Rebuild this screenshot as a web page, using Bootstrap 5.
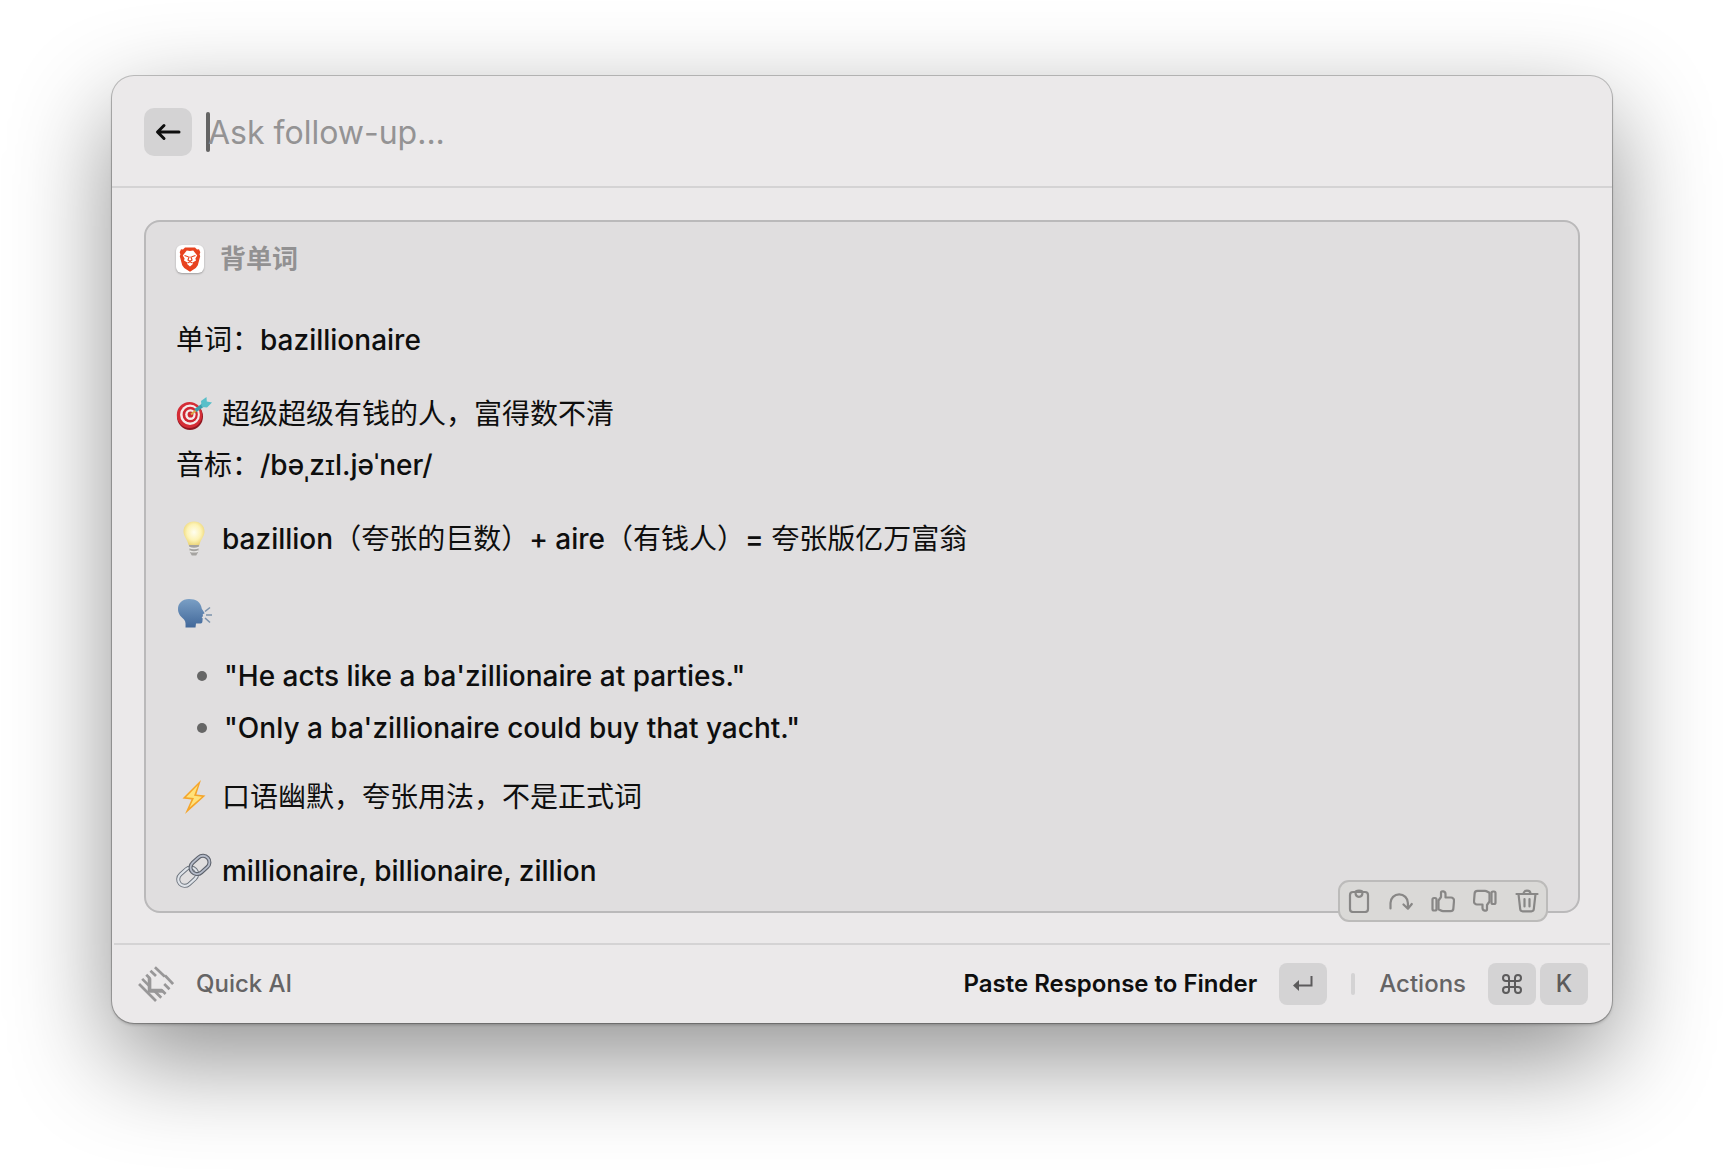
<!DOCTYPE html>
<html lang="zh-CN">
<head>
<meta charset="utf-8">
<meta name="viewport" content="width=device-width, initial-scale=1">
<title>Quick AI</title>
<link href="https://cdn.jsdelivr.net/npm/bootstrap@5.3.0/dist/css/bootstrap.min.css" rel="stylesheet">
<style>
  body { background: #fff; color: #0e0e0e; font-family: Inter, "Noto Sans CJK SC", sans-serif; font-weight: 500; padding: 76px 112px 140px; min-height: 100vh; }
  .panel-window { background: #ebe9ea; border-radius: 22px; box-shadow: 0 0 0 1px rgba(0,0,0,.22), 0 2px 3px rgba(0,0,0,.2), 0 36px 100px rgba(0,0,0,.44); }
  .panel-head { padding: 32px 32px 30px; border-bottom: 2px solid #d4d3d4; }
  .back-btn { width: 48px; height: 48px; border-radius: 10px; background: #d4d3d4; color: #0e0e0e; margin-right: 14px; }
  .text-caret { width: 4px; height: 40px; border-radius: 2px; background: #646464; margin-right: -2px; }
  .ask-input { font-size: 32px; line-height: 40px; height: 48px; color: #0e0e0e; outline: 0; padding: 1px 0 0; }
  .ask-input::placeholder { color: #949394; opacity: 1; }
  .panel-body { padding: 32px 32px 30px; }
  .answer { border: 2px solid #bab9ba; border-radius: 16px; background: #e0dedf; padding: 22px 30px 14px; font-size: 28px; line-height: 51px; }
  .answer-title { gap: 16px; font-size: 26px; line-height: 30px; font-weight: 600; color: #929192; margin-bottom: 41px; }
  .app-icon { width: 28px; height: 28px; border-radius: 6px; background: #fff; box-shadow: 0 1px 2px rgba(0,0,0,.3); }
  .answer p { margin-bottom: 23px; }
  .answer p.tight { margin-bottom: 11px; }
  .zh { font-weight: 400; }
  .emoji { width: 36px; height: 36px; margin-right: 10px; vertical-align: -8px; }
  .answer ul { margin-bottom: 18px; padding-left: 21px; line-height: 52px; }
  .answer li { gap: 17px; }
  .answer li::before { content: ""; width: 10px; height: 10px; border-radius: 50%; background: #666; }
  .tool-strip { right: 30px; bottom: -11px; border: 2px solid #bcbbba; border-radius: 11px; background: #dad9d7; padding: 7px; gap: 18px; color: #888786; }
  .tool-strip svg, .tool-strip button { width: 24px; height: 24px; }
  .panel-foot { border-top: 2px solid #d4d3d4; margin: 0 2px; padding: 18px 22px 18px 24px; font-size: 24px; line-height: 42px; color: #656465; }
  .foot-logo { width: 36px; height: 36px; margin-right: 22px; color: #989798; }
  .foot-btn { font-size: 24px; line-height: 42px; font-weight: 500; color: #656465; gap: 22px; }
  .foot-btn.primary-action { color: #0e0e0e; font-weight: 600; }
  .key-cap { width: 48px; height: 42px; border-radius: 8px; background: #d4d3d4; color: #5c5b5c; font: 500 24px/42px Inter, sans-serif; }
  .foot-sep { width: 4px; height: 22px; border-radius: 2px; background: #d4d3d4; margin: 0 24px; }
</style>
</head>
<body>
<main class="panel-window">
  <header class="panel-head d-flex align-items-center">
    <button type="button" class="back-btn btn border-0 p-0 d-flex align-items-center justify-content-center" aria-label="Back">
      <svg width="26" height="20" viewBox="0 0 26 20" fill="none" stroke="currentColor" stroke-width="3" stroke-linecap="round" stroke-linejoin="round"><path d="M24 10H3M9 3.500 2.500 10 9 16.500"/></svg>
    </button>
    <span class="text-caret flex-shrink-0"></span>
    <input class="ask-input flex-grow-1 border-0 bg-transparent" type="text" placeholder="Ask follow-up..." aria-label="Ask follow-up">
  </header>

  <div class="panel-body">
    <article class="answer position-relative">
      <div class="answer-title d-flex align-items-center">
        <span class="app-icon d-flex align-items-center justify-content-center">
          <svg width="22" height="25" viewBox="0 0 22 25"><path d="M6 .5h10l2 2 2-.2 1.300 3-.7 2 .6 2-2.400 9-2 2.700-5.800 3.700-5.800-3.700-2-2.700L.8 9.300l.6-2-.7-2L2 2.300l2 .2z" fill="#e8421f"/><path d="m11 4 3.200-.4 4 4.800-1.800 3 .6 2-3.300 2 .2 1.500L11 19.500l-2.900-2.600.2-1.500-3.300-2 .6-2-1.800-3 4-4.800z" fill="#fff"/><path d="m5.500 8.500 3.700 1.200M16.500 8.500l-3.700 1.200M10.200 9.500 9 13l2 1.300 2-1.300-1.200-3.500M8.500 16l2.500-1.200 2.500 1.200" fill="none" stroke="#e8421f" stroke-width="1.200"/></svg>
        </span>
        <span>背单词</span>
      </div>

      <p><span class="zh">单词：</span>bazillionaire</p>
      <p><svg class="emoji" viewBox="0 0 36 36" role="img" aria-label="Direct hit"><ellipse cx="14" cy="20.500" rx="13" ry="13.500" fill="#8f1620"/><ellipse cx="13.500" cy="19" rx="12.700" ry="13" fill="#d42c35"/><ellipse cx="14" cy="18.800" rx="9.900" ry="10.200" fill="#f4eaea"/><ellipse cx="14.200" cy="18.700" rx="7.600" ry="7.900" fill="#cf2631"/><ellipse cx="14.400" cy="18.600" rx="5.200" ry="5.400" fill="#f4eaea"/><ellipse cx="14.500" cy="18.500" rx="2.900" ry="3.100" fill="#cf2631"/><path d="m15 18.500 5.500-4.500" stroke="#d9a648" stroke-width="2.200"/><path d="m19.500 14.500 9-6.500" stroke="#3a9eac" stroke-width="3.600"/><path d="m25.500 10-.5-5L30.500 1l.3 4.500 5.200 1-5 5-4.500-.5z" fill="#58bfc9"/></svg><span class="zh">超级超级有钱的人，富得数不清<br>音标：</span>/bəˌzɪl.jəˈner/</p>
      <p><svg class="emoji" viewBox="0 0 36 36" role="img" aria-label="Light bulb"><defs><radialGradient id="glow" cx=".5" cy=".45" r=".6"><stop offset="0" stop-color="#fffef0"/><stop offset=".55" stop-color="#fdf3b5"/><stop offset="1" stop-color="#e9cf6c"/></radialGradient></defs><path d="M18 .5C11.500.5 7.500 5 7.500 10.500c0 5 4 8 5.300 14h10.400c1.300-6 5.300-9 5.300-14C28.500 5 24.500.5 18 .5z" fill="url(#glow)"/><path d="M13 24h10l-.8 7-2 3.500h-4.400l-2-3.500z" fill="#a5a3a0"/><path d="M13 26.500c3 1.200 7 1.200 10 0M13.500 30c3 1.200 6 1.200 9 0" stroke="#e9e8e6" stroke-width="1.400" fill="none"/></svg>bazillion<span class="zh">（夸张的巨数）</span>+ aire<span class="zh">（有钱人）</span>= <span class="zh">夸张版亿万富翁</span></p>
      <p class="tight"><svg class="emoji" viewBox="0 0 36 36" role="img" aria-label="Speaking head"><defs><linearGradient id="head" x2="0" y2="1"><stop stop-color="#7a9fc5"/><stop offset="1" stop-color="#42689a"/></linearGradient></defs><path d="M13 4C6 4 2 8.500 2 14c0 5.500 3.500 8 6 10.500 2 2 1.500 5 1.500 8h10l.5-4h4.500c1.500 0 2-1 2-3l.2-2-1-1.200 1.300-1-.3-2 2-1-2.900-4.500C25 7 20 4 13 4z" fill="url(#head)"/><path d="m29 16.500 5-4M30 20h6M29 23l5 4.500" stroke="#7b92ac" stroke-width="1.600"/></svg></p>
      <ul class="list-unstyled">
        <li class="d-flex align-items-center">"He acts like a ba'zillionaire at parties."</li>
        <li class="d-flex align-items-center">"Only a ba'zillionaire could buy that yacht."</li>
      </ul>
      <p><svg class="emoji" viewBox="0 0 36 36" role="img" aria-label="High voltage"><path d="M25 1 6.500 19.500l9 1L9 35l20.500-18.500-9.200-1z" fill="#f5a52b"/><path d="M22 6 10 18.300l8 .8-4.500 9.500L26 17.700l-8-1z" fill="#ffe27a"/></svg><span class="zh">口语幽默，夸张用法，不是正式词</span></p>
      <p class="mb-0"><svg class="emoji" viewBox="0 0 36 36" role="img" aria-label="Link" fill="none"><g transform="rotate(-42 18 18)"><rect x="-1" y="11.500" width="21" height="13" rx="6.500" stroke="#6c737d" stroke-width="4"/><rect x="-1" y="11.500" width="21" height="13" rx="6.500" stroke="#dfe3e9" stroke-width="2.200"/><rect x="16" y="11" width="21" height="13" rx="6.500" stroke="#5c616b" stroke-width="4"/><rect x="16" y="11" width="21" height="13" rx="6.500" stroke="#b5bbc9" stroke-width="1.800"/></g></svg>millionaire, billionaire, zillion</p>

      <div class="tool-strip position-absolute d-flex" role="toolbar" aria-label="Response actions">
        <button type="button" class="btn border-0 p-0 d-flex text-reset" aria-label="Copy"><svg viewBox="0 0 24 24" fill="none" stroke="currentColor" stroke-width="2.200"><rect x="3" y="3" width="18" height="20" rx="3"/><path d="M8.500 3c0 6.500 7 6.500 7 0 0-2-7-2-7 0z"/></svg></button>
        <button type="button" class="btn border-0 p-0 d-flex text-reset" aria-label="Regenerate"><svg viewBox="0 0 24 24" fill="none" stroke="currentColor" stroke-width="2.200" stroke-linecap="round" stroke-linejoin="round"><path d="M1.500 19.500V14a8.700 8.700 0 0 1 17.400 0v5.500M14.500 15.500l4.400 4.200 3.900-4.700"/></svg></button>
        <button type="button" class="btn border-0 p-0 d-flex text-reset" aria-label="Good response"><svg viewBox="0 0 24 24" fill="none" stroke="currentColor" stroke-width="2.200" stroke-linejoin="round"><rect x="1.500" y="9" width="4" height="12.500" rx="1.500"/><path d="M7.500 11.500 10 8V3.500c0-2 4.500-1.500 4.500 1.500v3.500H20a3 3 0 0 1 3 3.200l-.6 7.500a3 3 0 0 1-3 3H12c-2 0-3-1.700-4.500-1.700z"/></svg></button>
        <button type="button" class="btn border-0 p-0 d-flex text-reset" aria-label="Bad response"><svg viewBox="0 0 24 24" fill="none" stroke="currentColor" stroke-width="2.200" stroke-linejoin="round"><g transform="rotate(180 12 12)"><rect x="1.500" y="9" width="4" height="12.500" rx="1.500"/><path d="M7.500 11.500 10 8V3.500c0-2 4.500-1.500 4.500 1.500v3.500H20a3 3 0 0 1 3 3.200l-.6 7.500a3 3 0 0 1-3 3H12c-2 0-3-1.700-4.500-1.700z"/></g></svg></button>
        <button type="button" class="btn border-0 p-0 d-flex text-reset" aria-label="Delete"><svg viewBox="0 0 24 24" fill="none" stroke="currentColor" stroke-width="2.200" stroke-linecap="round" stroke-linejoin="round"><path d="M1.500 5h21M8.500 5c0-4.500 7-4.500 7 0M3.500 5l1.700 15a2.500 2.500 0 0 0 2.500 2.300h8.600a2.500 2.500 0 0 0 2.500-2.300L20.500 5M9.500 10v7.500M14.500 10v7.500"/></svg></button>
      </div>
    </article>
  </div>

  <footer class="panel-foot d-flex align-items-center">
    <svg class="foot-logo" viewBox="0 0 24 24" aria-hidden="true"><path d="M11.300.8 17.800 7M18 6.300l5.400 5.700M.7 12 12 23.300M2.800 8.600l5 5M5.500 5.800 8 8.300M8.300 3.200l3.700 3.500M10.500 16.200l5 5M15.700 16l2.700 2.700M17.500 12l3.500 3.500" fill="none" stroke="#989798" stroke-width="1.800"/><path d="m6.500 6 2.400 2.400v6.800h7l2.300 2.600H6.500z" fill="#989798"/></svg>
    <span class="me-auto">Quick AI</span>
    <button type="button" class="btn foot-btn primary-action border-0 p-0 d-flex align-items-center">Paste Response to Finder
      <span class="key-cap d-flex align-items-center justify-content-center"><svg width="20" height="18" viewBox="0 0 20 18"><path d="M18.500 1v9.500H5" fill="none" stroke="currentColor" stroke-width="2"/><path d="M0 10.500 6 5v11z" fill="currentColor"/></svg></span>
    </button>
    <span class="foot-sep"></span>
    <button type="button" class="btn foot-btn border-0 p-0 d-flex align-items-center">Actions
      <span class="d-flex gap-1">
        <kbd class="key-cap p-0 d-flex align-items-center justify-content-center"><svg width="20" height="20" viewBox="0 0 20 20" fill="none" stroke="currentColor" stroke-width="2"><path d="M7 7h6v6H7zM7 7H4a3 3 0 1 1 3-3zM13 7V4a3 3 0 1 1 3 3zM13 13h3a3 3 0 1 1-3 3zM7 13v3a3 3 0 1 1-3-3z"/></svg></kbd>
        <kbd class="key-cap p-0 d-flex align-items-center justify-content-center">K</kbd>
      </span>
    </button>
  </footer>
</main>
<script src="https://cdn.jsdelivr.net/npm/bootstrap@5.3.0/dist/js/bootstrap.bundle.min.js"></script>
</body>
</html>
